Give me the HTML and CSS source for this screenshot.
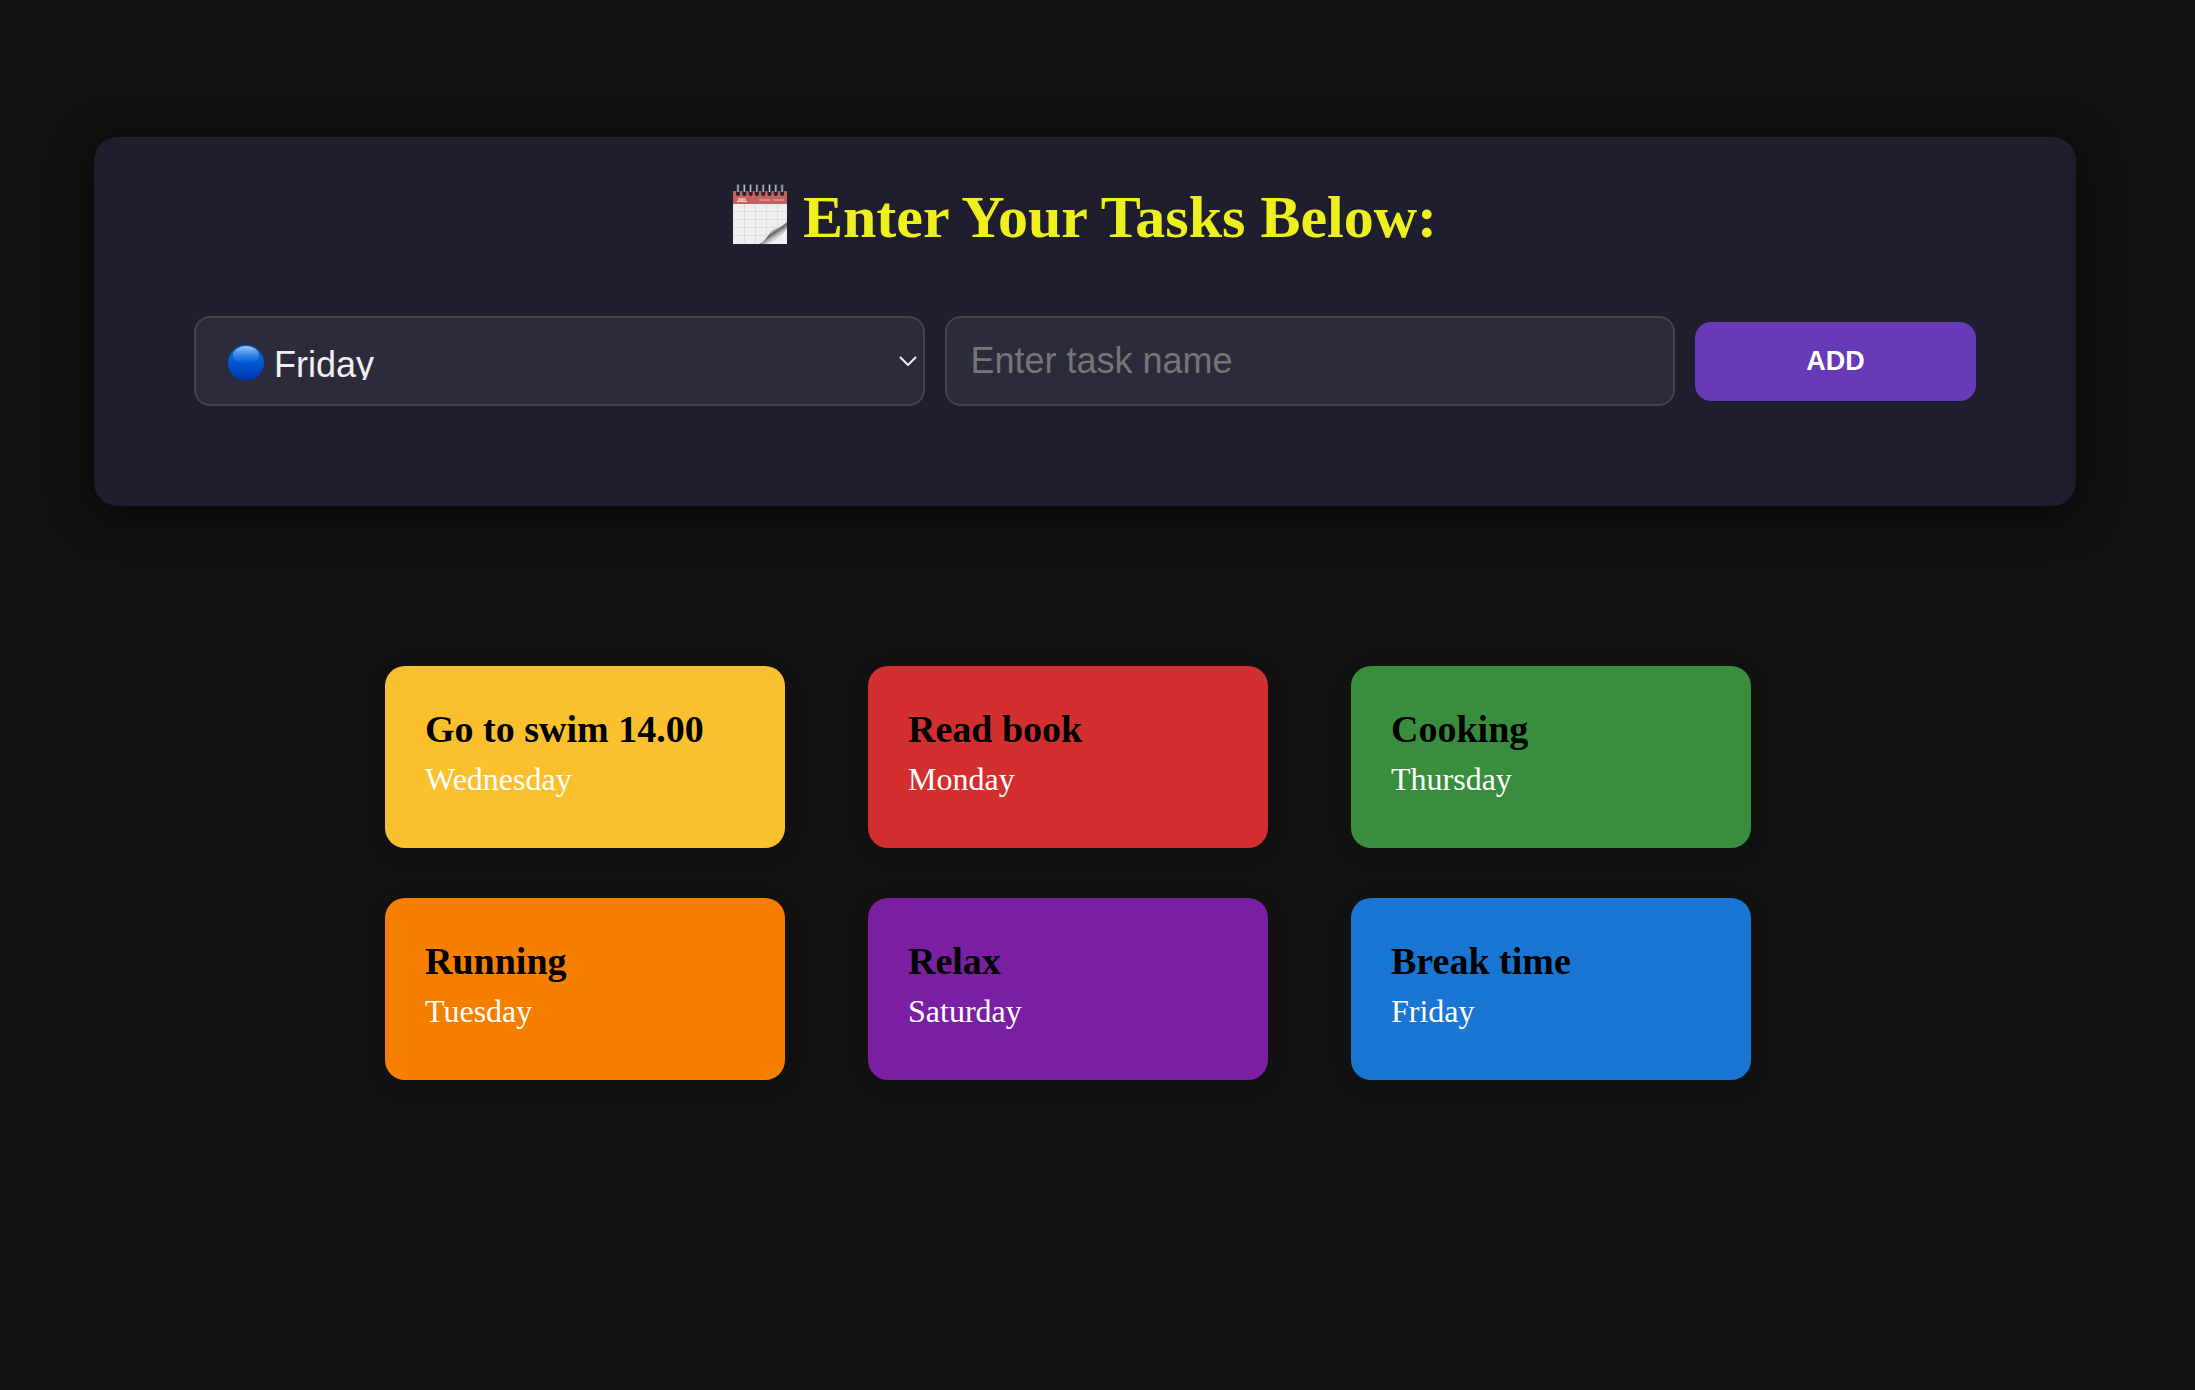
FILE: index.html
```html
<!DOCTYPE html>
<html lang="en">
<head>
  <meta charset="utf-8">
  <meta name="viewport" content="width=device-width, initial-scale=1">
  <title>Weekly Tasks</title>
  <link rel="stylesheet" href="styles.css">
</head>
<body>
  <main class="page">
    <section class="panel">
      <h1 class="panel-title">
        <svg class="calendar" viewBox="0 0 54 60" aria-hidden="true">
          <defs>
            <linearGradient id="curl" x1="0.3" y1="0.2" x2="0.75" y2="0.75">
              <stop offset="0" stop-color="#fafafa"/>
              <stop offset="0.4" stop-color="#c8c8c8"/>
              <stop offset="0.55" stop-color="#666"/>
              <stop offset="0.75" stop-color="#bbb"/>
              <stop offset="1" stop-color="#f4f4f4"/>
            </linearGradient>
          </defs>
          <path fill="#eeeef0" d="M0 8h54v52H0z"/>
          <path fill="#c46163" d="M0 7h54v13H0z"/>
          <path stroke="#dedee1" fill="none" d="M0 27.500h54M0 35.500h54M0 43.500h46M0 51.500h36M11.500 20v40M22.500 20v40M33.500 20v34M44.500 20v24"/>
          <path fill="url(#curl)" d="M26 60c7-3 9-9 12-13 5-3 12-4 16-10v23z"/>
          <path fill="#f1f1f1" d="M34 60c9-3 16-9 20-15v15z"/>
          <path stroke="#f6dcdc" stroke-width="1.200" fill="none" d="M6 14v3.500H4M8 14v3.500h2V14M12 14v3.500h2"/>
          <path stroke="#d08a8b" fill="none" stroke-width="2" d="M26 16h11M40 16h11"/>
          <path stroke="#2a2528" stroke-width="4" stroke-linecap="round" d="M5 7v3M11.300 7v3M17.600 7v3M23.900 7v3M30.200 7v3M36.500 7v3M42.800 7v3M49.100 7v3"/>
          <path stroke="#3c4a5c" stroke-width="3" d="M5 0v8M11.300 0v8M17.600 0v8M23.900 0v8M30.200 0v8M36.500 0v8M42.800 0v8M49.100 0v8"/>
          <path stroke="#c9d6de" stroke-width="1" d="M5 1v7M11.300 1v7M17.600 1v7M23.900 1v7M30.200 1v7M36.500 1v7M42.800 1v7M49.100 1v7"/>
        </svg>
        Enter Your Tasks Below:
      </h1>
      <form class="task-form">
        <div class="day-field">
          <select class="field day-select" aria-label="Day">
            <option>Monday</option>
            <option>Tuesday</option>
            <option>Wednesday</option>
            <option>Thursday</option>
            <option selected>Friday</option>
            <option>Saturday</option>
            <option>Sunday</option>
          </select>
          <svg class="day-dot" viewBox="0 0 36 35" aria-hidden="true">
            <defs>
              <linearGradient id="dot" x1="0" y1="0" x2="0" y2="1">
                <stop offset="0" stop-color="#0a5cc8"/>
                <stop offset="0.4" stop-color="#0062d6"/>
                <stop offset="0.55" stop-color="#0052cc"/>
                <stop offset="1" stop-color="#0034a8"/>
              </linearGradient>
              <linearGradient id="shine" x1="0" y1="0" x2="0" y2="1">
                <stop offset="0" stop-color="#a4ccff"/>
                <stop offset="1" stop-color="#3a8cf0" stop-opacity="0"/>
              </linearGradient>
            </defs>
            <circle cx="18" cy="18" r="18" fill="url(#dot)"/>
            <ellipse cx="18" cy="10" rx="13" ry="9" fill="url(#shine)"/>
          </svg>
          <svg class="chevron" viewBox="0 0 18 10" aria-hidden="true">
            <path d="M1 1l8 8 8-8" fill="none" stroke="#f0f0f0" stroke-width="2"/>
          </svg>
        </div>
        <input class="field task-input" type="text" placeholder="Enter task name" aria-label="Task name">
        <button class="add-button" type="button">ADD</button>
      </form>
    </section>

    <section class="board" aria-label="Tasks">
      <article class="card wednesday"><h2 class="card-title">Go to swim 14.00</h2><p class="card-day">Wednesday</p></article>
      <article class="card monday"><h2 class="card-title">Read book</h2><p class="card-day">Monday</p></article>
      <article class="card thursday"><h2 class="card-title">Cooking</h2><p class="card-day">Thursday</p></article>
      <article class="card tuesday"><h2 class="card-title">Running</h2><p class="card-day">Tuesday</p></article>
      <article class="card saturday"><h2 class="card-title">Relax</h2><p class="card-day">Saturday</p></article>
      <article class="card friday"><h2 class="card-title">Break time</h2><p class="card-day">Friday</p></article>
    </section>
  </main>
</body>
</html>
```
FILE: styles.css
```css
* {
  box-sizing: border-box;
}

body {
  margin: 0;
  background: #121212;
  color: #fff;
  font-family: "Liberation Serif", "Times New Roman", serif;
}

.page {
  padding: 137px 119px 60px 94px;
}

.panel {
  padding: 40px 100px 100px;
  border-radius: 24px;
  background: #1f1e2e;
  box-shadow: 0 8px 40px rgba(0, 0, 0, 0.6);
}

.panel-title {
  display: flex;
  align-items: center;
  justify-content: center;
  gap: 16px;
  margin: 0 0 59px;
  color: #eef01e;
  font-size: 60px;
  line-height: 80px;
}

.calendar {
  width: 54px;
  height: 60px;
  margin-bottom: 6px;
}

.task-form {
  display: grid;
  grid-template-columns: 1fr 1fr 281px;
  align-items: center;
  gap: 20px;
}

.field {
  width: 100%;
  height: 90px;
  border: 2px solid #444;
  border-radius: 16px;
  background: #2c2b3b;
  color: #f0f0f0;
  font-family: "Liberation Sans", Arial, sans-serif;
  font-size: 36px;
}

.day-field {
  position: relative;
}

.day-select {
  display: block;
  padding: 24px 40px 24px 78px;
  line-height: 46px;
  appearance: none;
}

.day-dot {
  position: absolute;
  top: 29px;
  left: 34px;
  width: 36px;
  height: 35px;
  pointer-events: none;
}

.chevron {
  position: absolute;
  top: 40px;
  right: 8px;
  width: 18px;
  height: 10px;
  pointer-events: none;
}

.task-input {
  min-width: 0;
  padding: 0 24px;
}

.task-input::placeholder {
  color: #757575;
}

.add-button {
  height: 79px;
  border: 0;
  border-radius: 16px;
  background: #673ab7;
  color: #fff;
  font-family: "Liberation Sans", Arial, sans-serif;
  font-size: 27px;
  font-weight: bold;
}

.board {
  display: flex;
  flex-wrap: wrap;
  justify-content: space-evenly;
  row-gap: 50px;
  margin-top: 160px;
  padding: 0 242px 0 208px;
}

.card {
  width: 400px;
  height: 182px;
  padding: 40px;
  border-radius: 20px;
  box-shadow: 0 4px 20px rgba(0, 0, 0, 0.1);
}

.card-title,
.card-day {
  margin: 0;
}

.card-title {
  color: #000;
  font-size: 38px;
  line-height: 46px;
}

.card-day {
  margin-top: 8px;
  font-size: 32px;
  line-height: 38px;
}

.monday { background: #d32f2f; }
.tuesday { background: #f77f00; }
.wednesday { background: #fbc02d; }
.thursday { background: #388e3c; }
.friday { background: #1976d2; }
.saturday { background: #7b1fa2; }
```
